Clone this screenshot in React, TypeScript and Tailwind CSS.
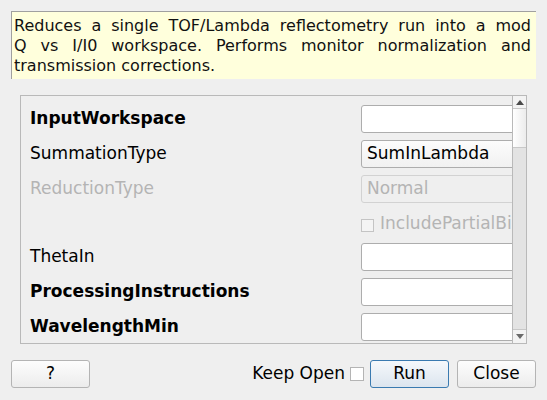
import React from "react";

const font = { fontFamily: '"DejaVu Sans", "Liberation Sans", sans-serif' };

function TextInput() {
  return <div className="h-[28px] w-[170px] shrink-0 rounded-[3px] border border-[#adadad] bg-white" />;
}

function Row({ label, bold, disabled, children }: { label: string; bold?: boolean; disabled?: boolean; children: React.ReactNode }) {
  return (
    <div className="flex h-[28px] items-center">
      <div className={`w-[331px] shrink-0 text-[17px] ${bold ? "font-bold text-black" : disabled ? "text-[#b4b4b4]" : "text-black"}`}>{label}</div>
      {children}
    </div>
  );
}

export default function App() {
  return (
    <div className="flex h-[400px] w-[547px] flex-col overflow-hidden bg-[#efefef] pt-[11px] text-black" style={font}>
      <div className="ml-[11px] h-[68px] w-[525px] shrink-0 border-l border-t border-[#a0a0a0] bg-[#ffffdc] pl-[2px] pr-[5px] pt-[4px] text-[16px] leading-[20px] text-[#111]">
        <div className="text-justify [text-align-last:justify]">Reduces a single TOF/Lambda reflectometry run into a mod</div>
        <div className="text-justify [text-align-last:justify]">Q vs I/I0 workspace. Performs monitor normalization and</div>
        <div>transmission corrections.</div>
      </div>

      <div className="ml-[20px] mt-[16px] flex h-[249px] w-[507px] shrink-0 border border-[#b9b9b9]">
        <div className="flex flex-1 flex-col gap-[7px] overflow-hidden pl-[9px] pt-[9px]">
          <Row label="InputWorkspace" bold>
            <TextInput />
          </Row>
          <Row label="SummationType">
            <div className="flex h-[28px] w-[170px] shrink-0 items-center rounded-[3px] border border-[#adadad] bg-gradient-to-b from-[#fcfcfc] to-[#f1f1f1] pl-[5px] text-[17px] text-black">
              SumInLambda
            </div>
          </Row>
          <Row label="ReductionType" disabled>
            <div className="flex h-[28px] w-[170px] shrink-0 items-center rounded-[3px] border border-[#d2d2d2] bg-[#efefef] pl-[5px] text-[17px] text-[#b4b4b4]">
              Normal
            </div>
          </Row>
          <div className="flex h-[26px] items-center overflow-hidden pl-[331px]">
            <div className="mt-[4px] h-[13px] w-[13px] shrink-0 border border-[#c4c4c4] bg-[#f4f4f4]" />
            <div className="ml-[6px] mt-[2px] whitespace-nowrap text-[17px] text-[#b4b4b4]">IncludePartialBins</div>
          </div>
          <Row label="ThetaIn">
            <TextInput />
          </Row>
          <Row label="ProcessingInstructions" bold>
            <TextInput />
          </Row>
          <Row label="WavelengthMin" bold>
            <TextInput />
          </Row>
        </div>
        <div className="flex w-[14px] shrink-0 flex-col border-l border-[#b9b9b9] bg-[#e3e3e3]">
          <div className="flex h-[13px] items-center justify-center border-b border-[#c8c8c8] bg-[#f3f3f3]">
            <svg width="8" height="5" viewBox="0 0 8 5"><path d="M0 5 L4 0 L8 5 Z" fill="#4a4a4a" /></svg>
          </div>
          <div className="h-[39px] border-b border-[#c8c8c8] bg-gradient-to-r from-[#ffffff] to-[#ececec]" />
          <div className="flex-1" />
          <div className="flex h-[14px] items-center justify-center border-t border-[#c8c8c8] bg-[#f3f3f3]">
            <svg width="8" height="5" viewBox="0 0 8 5"><path d="M0 0 L8 0 L4 5 Z" fill="#6a6a6a" /></svg>
          </div>
        </div>
      </div>

      <div className="mt-[16px] flex items-center pl-[11px] pr-[11px] text-[17px]">
        <button className="flex h-[28px] w-[79px] items-center justify-center rounded-[3px] border border-[#b4b4b4] bg-gradient-to-b from-[#fdfdfd] to-[#ececec] text-black">?</button>
        <div className="flex-1" />
        <span className="text-black">Keep Open</span>
        <div className="ml-[5px] h-[14px] w-[14px] border border-[#b4b4b4] bg-white" />
        <button className="ml-[6px] flex h-[28px] w-[79px] items-center justify-center rounded-[3px] border border-[#3a7ab0] bg-gradient-to-b from-[#f5f8fb] to-[#dce5ee] text-black">Run</button>
        <button className="ml-[8px] flex h-[28px] w-[79px] items-center justify-center rounded-[3px] border border-[#b4b4b4] bg-gradient-to-b from-[#fdfdfd] to-[#ececec] text-black">Close</button>
      </div>
    </div>
  );
}
